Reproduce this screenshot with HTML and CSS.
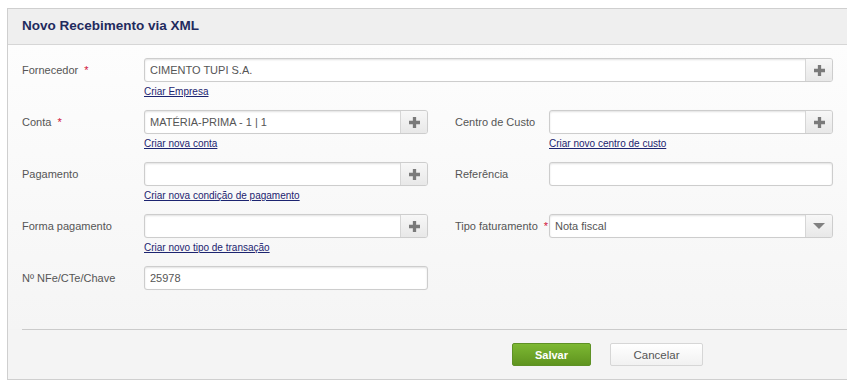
FILE: index.html
```html
<html>
  <head>
    <title>Novo Recebimento via XML</title>
    <link rel="stylesheet" href="styles.css">
  </head>
  <body>
    <div class="panel">
      <div class="panel-header">
        <h2>Novo Recebimento via XML</h2>
      </div>

      <div class="panel-body">
        <div class="form-grid">
          <!-- Fornecedor -->
          <label class="lbl">Fornecedor <span class="req">*</span></label>
          <div class="field wide">
            <div class="combo">
              <input type="text" value="CIMENTO TUPI S.A.">
              <span class="addon"><svg class="plus" viewBox="0 0 10 10"><path d="M5 0v10M0 5h10"/></svg></span>
            </div>
            <a href="#" class="link">Criar Empresa</a>
          </div>

          <!-- Conta / Centro de Custo -->
          <label class="lbl">Conta <span class="req">*</span></label>
          <div class="field">
            <div class="combo">
              <input type="text" value="MATÉRIA-PRIMA - 1 | 1">
              <span class="addon"><svg class="plus" viewBox="0 0 10 10"><path d="M5 0v10M0 5h10"/></svg></span>
            </div>
            <a href="#" class="link">Criar nova conta</a>
          </div>
          <span></span>
          <label class="lbl">Centro de Custo</label>
          <div class="field">
            <div class="combo">
              <input type="text" value="">
              <span class="addon"><svg class="plus" viewBox="0 0 10 10"><path d="M5 0v10M0 5h10"/></svg></span>
            </div>
            <a href="#" class="link">Criar novo centro de custo</a>
          </div>

          <!-- Pagamento / Referencia -->
          <label class="lbl">Pagamento</label>
          <div class="field">
            <div class="combo">
              <input type="text" value="">
              <span class="addon"><svg class="plus" viewBox="0 0 10 10"><path d="M5 0v10M0 5h10"/></svg></span>
            </div>
            <a href="#" class="link">Criar nova condição de pagamento</a>
          </div>
          <span></span>
          <label class="lbl">Referência</label>
          <div class="field">
            <div class="combo">
              <input type="text" value="">
            </div>
          </div>

          <!-- Forma pagamento / Tipo faturamento -->
          <label class="lbl">Forma pagamento</label>
          <div class="field">
            <div class="combo">
              <input type="text" value="">
              <span class="addon"><svg class="plus" viewBox="0 0 10 10"><path d="M5 0v10M0 5h10"/></svg></span>
            </div>
            <a href="#" class="link">Criar novo tipo de transação</a>
          </div>
          <span></span>
          <label class="lbl">Tipo faturamento <span class="req">*</span></label>
          <div class="field">
            <div class="combo">
              <input type="text" value="Nota fiscal">
              <span class="addon"><span class="caret"></span></span>
            </div>
          </div>

          <!-- Chave -->
          <label class="lbl">Nº NFe/CTe/Chave</label>
          <div class="field">
            <div class="combo">
              <input type="text" value="25978">
            </div>
          </div>
        </div>
      </div>

      <div class="panel-footer">
        <button class="btn btn-save">Salvar</button>
        <button class="btn btn-cancel">Cancelar</button>
      </div>
    </div>
  </body>
</html>
```

FILE: styles.css
```css
body {
  margin: 0;
  background: #fff;
  color: #555;
  font-family: "Liberation Sans", Arial, sans-serif;
  font-size: 11px;
}
.panel {
  margin: 8px 0 0 7px;
  width: calc(100% - 7px);
  box-sizing: border-box;
  border: 1px solid #cfcfcf;
  border-right: 0;
  background: #f4f4f4;
}
.panel-header {
  height: 35px;
  background: #efefef;
  border-bottom: 1px solid #d6d6d6;
  padding-left: 14px;
}
.panel-header h2 {
  margin: 0;
  font-size: 13.5px;
  line-height: 34px;
  color: #1f2b5e;
  font-weight: bold;
}
.panel-body {
  background: linear-gradient(#fdfdfd, #f5f5f5);
  padding: 13px 0 11px 14px;
}
.form-grid {
  display: grid;
  grid-template-columns: 122px 284px 27px 94px 284px;
  grid-auto-rows: 52px;
}
.lbl {
  line-height: 24px;
  color: #555;
  white-space: nowrap;
}
.req {
  color: #d0103a;
  margin-left: 3px;
}
.field.wide {
  grid-column: 2 / 6;
}
.combo {
  display: flex;
  height: 24px;
  box-sizing: border-box;
  border: 1px solid #cdcdcd;
  border-radius: 3px;
  background: #fff;
  box-shadow: inset 0 1px 2px rgba(0,0,0,0.12), 0 0 1px rgba(0,0,0,0.05);
  overflow: hidden;
}
.combo input {
  flex: 1;
  min-width: 0;
  border: 0;
  outline: none;
  background: transparent;
  padding: 0 5px;
  font-family: "Liberation Sans", Arial, sans-serif;
  font-size: 11px;
  color: #555;
}
.addon {
  width: 26px;
  border-left: 1px solid #d6d6d6;
  background: linear-gradient(#f7f7f7, #e8e8e8);
  display: flex;
  align-items: center;
  justify-content: center;
}
.plus {
  width: 11px;
  height: 11px;
  stroke: #7a7a7a;
  stroke-width: 3;
  fill: none;
}
.caret {
  width: 0;
  height: 0;
  border-left: 6px solid transparent;
  border-right: 6px solid transparent;
  border-top: 6px solid #808080;
}
.link {
  display: block;
  margin-top: 4px;
  font-size: 10px;
  color: #1c2470;
  text-decoration: underline;
}
.panel-footer {
  margin-left: 14px;
  border-top: 1px solid #cbcbcb;
  height: 49px;
  padding-left: 490px;
  display: flex;
  align-items: center;
  gap: 19px;
}
.btn {
  height: 23px;
  border-radius: 2px;
  font-family: "Liberation Sans", Arial, sans-serif;
  font-size: 11.5px;
  cursor: pointer;
}
.btn-save {
  width: 79px;
  border: 1px solid #5e9125;
  background: linear-gradient(#7db832, #5f941f);
  color: #fff;
  font-weight: bold;
  font-size: 11px;
}
.btn-cancel {
  width: 93px;
  border: 1px solid #d6d6d6;
  background: linear-gradient(#fff, #f1f1f1);
  color: #555;
}
```
